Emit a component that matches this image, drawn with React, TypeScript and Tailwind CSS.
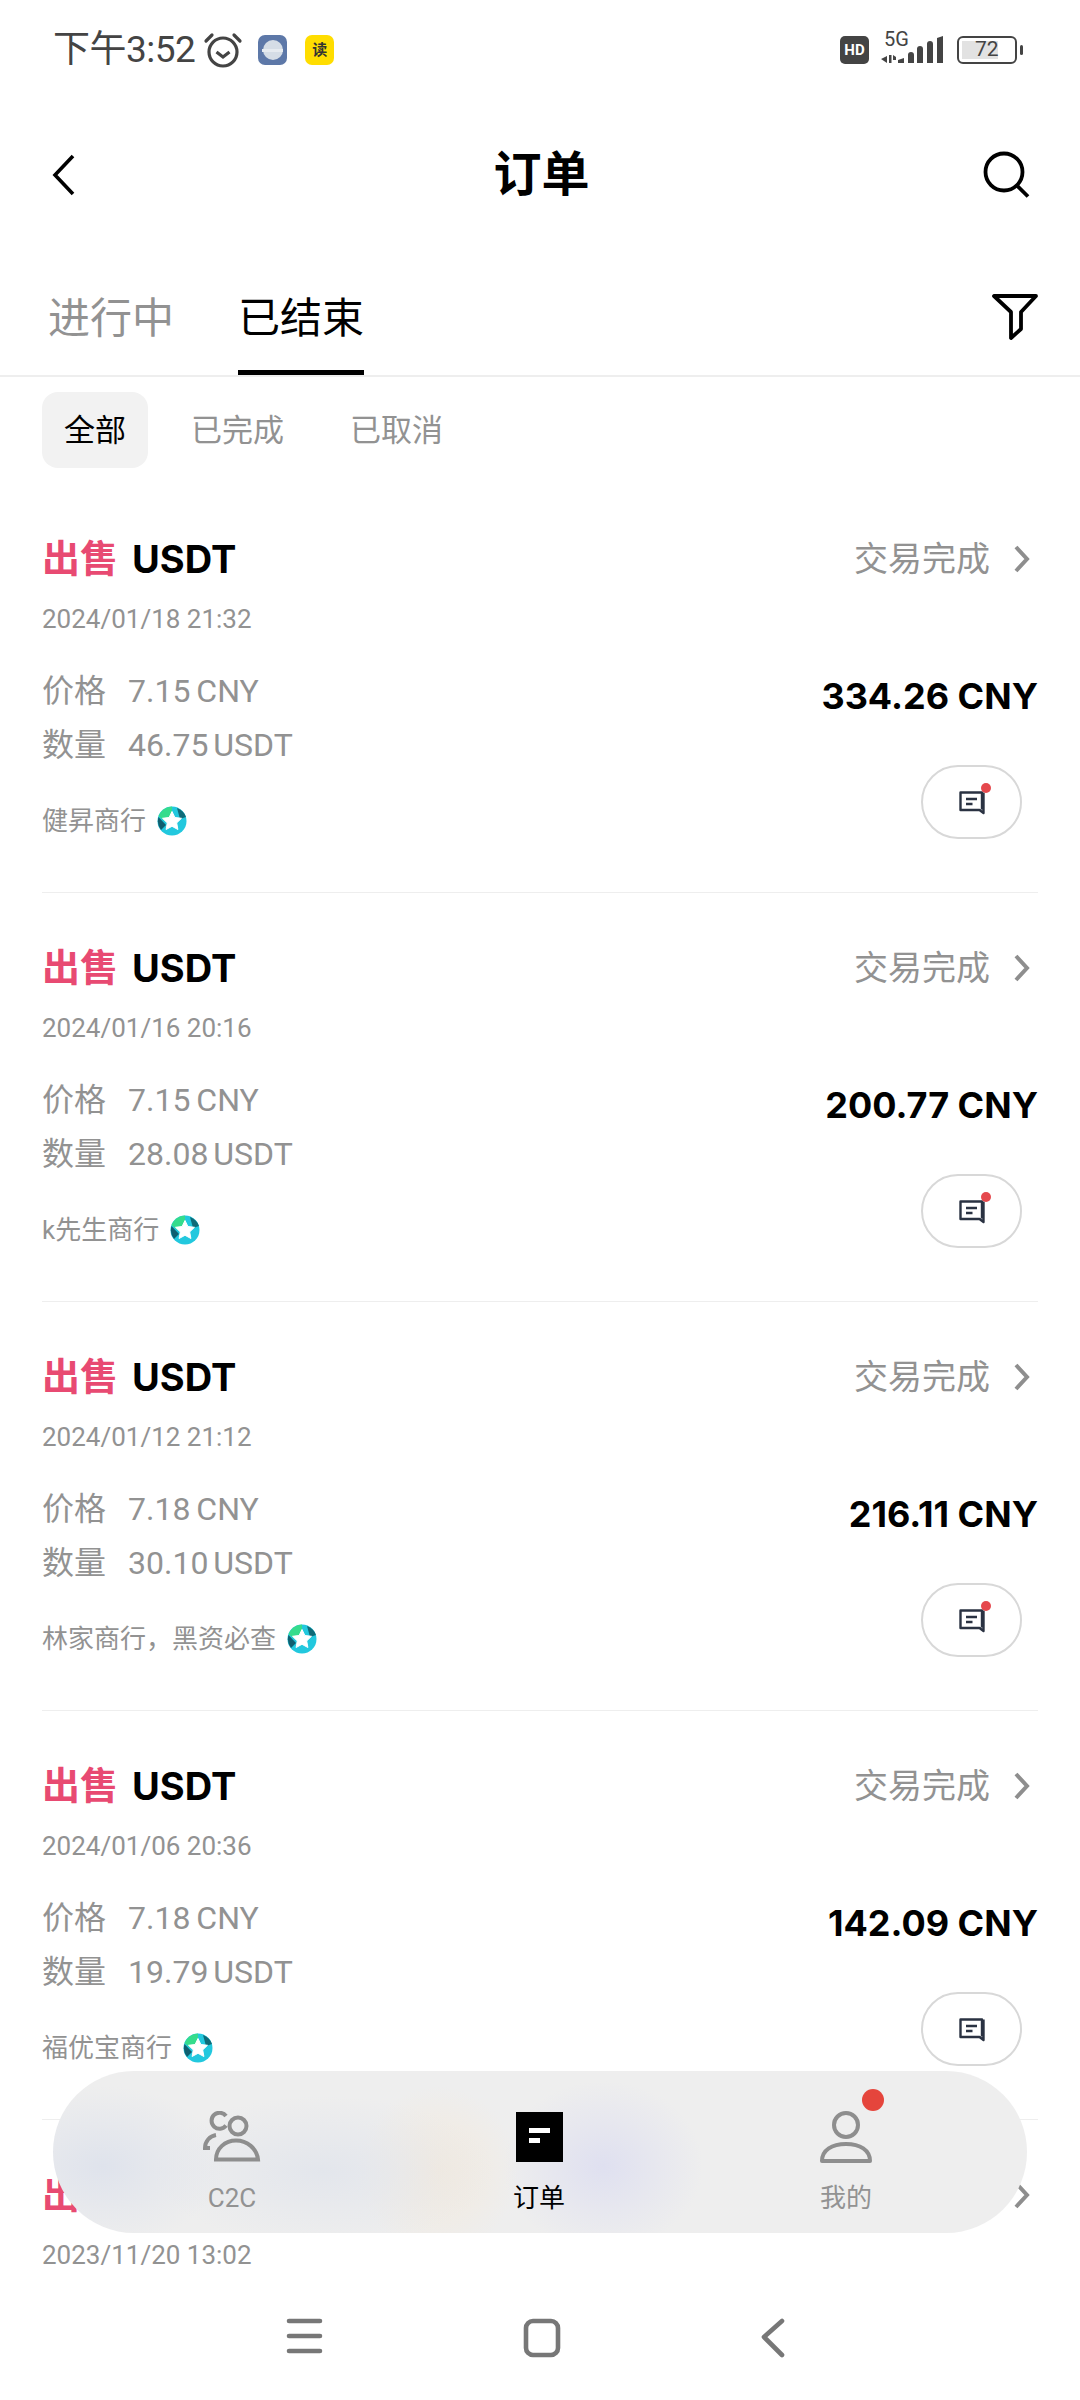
import React from 'react';

// the last row is cut off by the tab pill and system bar: only its visible parts are given
const orders = [
  { date: '2024/01/18 21:32', price: '7.15', qty: '46.75', total: '334.26', shop: '健昇商行', dot: true },
  { date: '2024/01/16 20:16', price: '7.15', qty: '28.08', total: '200.77', shop: 'k先生商行', dot: true },
  { date: '2024/01/12 21:12', price: '7.18', qty: '30.10', total: '216.11', shop: '林家商行，黑资必查', dot: true },
  { date: '2024/01/06 20:36', price: '7.18', qty: '19.79', total: '142.09', shop: '福优宝商行', dot: false },
  { date: '2023/11/20 13:02', price: '', qty: '', total: '', shop: '', dot: false },
];

const StarBadge = () => (
  <svg width="30" height="30" viewBox="0 0 30 30">
    <circle cx="15" cy="15" r="14.500" fill="#22c8de" />
    <path d="M15 .5A14.500 14.500 0 0 0 1.500 10l6 5L15 8z" fill="#35dc8c" />
    <path d="M20 2A14.500 14.500 0 0 1 29 11l-6 2z" fill="#0f6a78" />
    <path d="M1.500 11A14.500 14.500 0 0 0 4 24l5-5z" fill="#0f5f70" />
    <path d="M15 5.500l2.900 6 6.600.8-4.800 4.600 1.200 6.600-5.900-3.200-5.900 3.200 1.200-6.600-4.800-4.600 6.600-.8z" fill="#fff" stroke="#fff" strokeWidth="1" strokeLinejoin="round" />
  </svg>
);

const ChatIcon = ({ dot }: { dot: boolean }) => (
  <span className="relative flex h-[32px] w-[32px] items-center justify-center">
    <svg width="30" height="30" viewBox="0 0 30 30" fill="none" stroke="#2a3242" strokeWidth="2.400">
      <path d="M25 22.500V5.500H3.500V23H22.500L26.500 26V5.500" strokeLinejoin="round" />
      <path d="M9 12H20M9 17H15.500" />
    </svg>
    {dot && <span className="absolute right-[-3px] top-[-3px] h-[10px] w-[10px] rounded-full bg-[#e5484d]" />}
  </span>
);

const Chevron = () => (
  <svg width="18" height="30" viewBox="0 0 18 30" fill="none" stroke="#8e8e8e" strokeWidth="4">
    <path d="M3 3l11 12L3 27" />
  </svg>
);

const Order = ({ o }: { o: (typeof orders)[number] }) => (
  <div className="flex h-[409px] shrink-0 justify-between border-b border-[#eeeeee] pt-[55px]">
    <div className="flex flex-col">
      <div className="flex h-[40px] items-center text-[38px] font-bold leading-[40px] text-black">
        <span className="text-[#e84a72]">出售</span>
        {o.total && <span className="ml-[14px] font-['Inter']">USDT</span>}
      </div>
      <div className="mt-[22px] text-[26px] leading-[36px] text-[#929292]">{o.date}</div>
      {o.total && (
        <>
          <div className="mt-[27px] flex text-[32px] leading-[54px] text-[#929292]">
            <span className="w-[86px]">价格</span>
            <span className="[word-spacing:-2px]">{o.price} CNY</span>
          </div>
          <div className="flex text-[32px] leading-[54px] text-[#929292]">
            <span className="w-[86px]">数量</span>
            <span className="[word-spacing:-3px]">{o.qty} USDT</span>
          </div>
          <div className="mt-[29px] flex h-[40px] items-center text-[26px] text-[#929292]">
            <span>{o.shop}</span>
            <span className="ml-[11px]"><StarBadge /></span>
          </div>
        </>
      )}
    </div>
    <div className="flex flex-col items-end">
      <div className="flex h-[40px] items-center text-[34px] text-[#929292]">
        {o.total && <span>交易完成</span>}
        <span className="ml-[23px] mr-[7px]"><Chevron /></span>
      </div>
      {o.total && (
        <>
          <div className="mt-[95px] font-['Inter'] text-[36px] font-bold leading-[44px] text-black">{o.total} CNY</div>
          <div className="mr-[16px] mt-[47px] flex h-[74px] w-[101px] items-center justify-center rounded-full border-2 border-[#d8d8d8]">
            <ChatIcon dot={o.dot} />
          </div>
        </>
      )}
    </div>
  </div>
);

const NavItem = ({ label, active, badge, children }: { label: string; active?: boolean; badge?: boolean; children: React.ReactNode }) => (
  <div className="relative flex w-[120px] flex-col items-center">
    <div className="flex h-[58px] items-center justify-center">{children}</div>
    <div className={`mt-[14px] text-[26px] leading-[36px] ${active ? 'text-black' : 'text-[#929292]'}`}>{label}</div>
    {badge && <span className="absolute left-[76px] top-[-19px] h-[22px] w-[22px] rounded-full bg-[#e5453c]" />}
  </div>
);

export default function App() {
  return (
    <div className="relative flex h-[2400px] w-[1080px] flex-col overflow-hidden bg-white font-['Roboto','Noto_Sans_CJK_SC',sans-serif]">
      {/* status bar */}
      <div className="flex h-[100px] shrink-0 items-center justify-between pl-[53px] pr-[57px] text-[#444444]">
        <div className="flex items-center">
          <span className="text-[37px] tracking-[-0.5px]">下午3:52</span>
          <svg className="ml-[8px]" width="40" height="38" viewBox="0 0 40 38" fill="none" stroke="#444" strokeWidth="3.200">
            <circle cx="20" cy="21" r="14" />
            <path d="M13.500 21l6.500 5 6.500-5" />
            <path d="M3 10l6-6M37 10l-6-6" strokeLinecap="round" />
          </svg>
          <div className="relative ml-[15px] flex h-[30px] w-[29px] items-center justify-center rounded-[7px] bg-[#5d78a8]">
            <span className="h-[20px] w-[20px] rounded-full bg-[#d5dde6]" />
            <span className="absolute left-[4px] top-[14px] h-[3px] w-[21px] bg-[#e6ebf0]" />
          </div>
          <div className="ml-[18px] flex h-[30px] w-[29px] items-center justify-center rounded-[7px] bg-[#ffdd00] text-[15px] font-bold text-[#333333]">读</div>
        </div>
        <div className="flex items-center">
          <div className="flex h-[28px] w-[29px] items-center justify-center rounded-[5px] bg-[#444444] text-[15px] font-bold leading-none text-white">HD</div>
          <div className="relative ml-[12px] h-[34px] w-[62px]">
            <span className="absolute left-[3px] top-[-5px] text-[20px] leading-[22px]">5G</span>
            <svg width="62" height="34" viewBox="0 0 62 34" fill="#444">
              <path d="M0 26l6-3v7zM8 22h2.500v8H8zM12 22l3 2v3h-3zM17 30v-3l6-2v5zM27 30v-8a2 2 0 0 1 6 0v8zM36 30V16a2 2 0 0 1 6 0v14zM46 30V11a2 2 0 0 1 6 0v19zM56 30V5l6-2v27z" />
            </svg>
          </div>
          <div className="ml-[14px] flex items-center">
            <div className="flex h-[28px] w-[60px] items-center rounded-[6px] border-[2.500px] border-[#444444] p-[3px]">
              <div className="relative h-full w-[72%] bg-[#e2e2e2]">
                <span className="absolute left-[13px] top-[-7px] text-[21px] leading-[30px]">72</span>
              </div>
            </div>
            <span className="ml-[3px] h-[10px] w-[3px] rounded-full bg-[#444444]" />
          </div>
        </div>
      </div>

      {/* title bar */}
      <div className="flex h-[150px] shrink-0 items-center justify-between pl-[52px] pr-[49px]">
        <div className="w-[48px]">
          <svg width="24" height="44" viewBox="0 0 24 44" fill="none" stroke="#000" strokeWidth="3.600">
            <path d="M21 3L3 22l18 19" />
          </svg>
        </div>
        <span className="text-[48px] font-bold text-black">订单</span>
        <svg width="48" height="48" viewBox="0 0 48 48" fill="none" stroke="#000" strokeWidth="3.800">
          <circle cx="21" cy="21" r="18.500" />
          <path d="M33.500 34L45 45.500" />
        </svg>
      </div>

      {/* tabs */}
      <div className="flex h-[127px] shrink-0 items-end justify-between border-b-2 border-[#eeeeee] pl-[48px] pr-[41px]">
        <div className="flex">
          <div className="h-[94px] text-[42px] leading-[75px] text-[#929292]">进行中</div>
          <div className="relative ml-[64px] h-[94px] w-[126px] text-center text-[42px] leading-[75px] text-black">
            已结束
            <span className="absolute bottom-0 left-0 h-[5px] w-full bg-black" />
          </div>
        </div>
        <svg className="mb-[34px]" width="48" height="48" viewBox="0 0 48 48" fill="none" stroke="#000" strokeWidth="3.800" strokeLinejoin="round">
          <path d="M3 3h42L30 19v17l-10 9V19z" />
        </svg>
      </div>

      {/* chips */}
      <div className="mt-[15px] flex shrink-0 items-center pl-[42px] text-[31px] text-[#929292]">
        <div className="flex h-[76px] w-[106px] items-center justify-center rounded-[16px] bg-[#f2f2f2] pt-[2px] text-black">全部</div>
        <div className="ml-[43px] pt-[2px]">已完成</div>
        <div className="ml-[66px] pt-[2px]">已取消</div>
      </div>

      {/* orders */}
      <div className="mt-[16px] flex flex-col px-[42px]">
        {orders.map((o) => (
          <Order key={o.date} o={o} />
        ))}
      </div>

      {/* bottom tab pill */}
      <div className="absolute bottom-[167px] left-[53px] flex h-[162px] w-[974px] items-center justify-between rounded-[81px] bg-[#eeeeee] bg-[radial-gradient(ellipse_120px_80px_at_50px_95px,#dfe3ec,transparent),radial-gradient(ellipse_170px_75px_at_270px_100px,#e3e6ec,transparent),radial-gradient(ellipse_80px_85px_at_385px_100px,#f3eadd,transparent),radial-gradient(ellipse_100px_85px_at_550px_95px,#dfe0f0,transparent)] pl-[119px] pr-[121px] pt-[20px]">
        <NavItem label="C2C">
          <svg width="60" height="52" viewBox="0 0 60 52" fill="none" stroke="#8e8e8e" strokeWidth="4">
            <path d="M24 14.500A8 8 0 1 1 24 5" />
            <circle cx="36" cy="15" r="8.500" />
            <path d="M14 24c-6 1-11 6-11 13l5 0" />
            <path d="M14 48.500c0-11 9-19 20-19s21 8 22 19z" />
          </svg>
        </NavItem>
        <NavItem label="订单" active>
          <div className="flex h-[50px] w-[47px] flex-col gap-[5px] bg-black pl-[13px] pt-[16px]">
            <span className="h-[5px] w-[21px] bg-white" />
            <span className="h-[5px] w-[11px] bg-white" />
          </div>
        </NavItem>
        <NavItem label="我的" badge>
          <svg width="54" height="52" viewBox="0 0 54 52" fill="none" stroke="#8e8e8e" strokeWidth="4">
            <circle cx="27" cy="14" r="12" />
            <path d="M3 50c0-11 10-17 24-17s24 6 24 17z" strokeLinejoin="round" />
          </svg>
        </NavItem>
      </div>

      {/* system nav */}
      <div className="absolute bottom-0 left-0 flex h-[115px] w-full items-start justify-between bg-white pl-[286px] pr-[294px] pt-[33px]">
        <svg width="37" height="36" viewBox="0 0 37 36" fill="none" stroke="#777" strokeWidth="4.600" strokeLinecap="round">
          <path d="M3 3h31M3 18h31M3 33h31" />
        </svg>
        <svg width="38" height="40" viewBox="0 0 38 40" fill="none" stroke="#777" strokeWidth="4.600">
          <rect x="3" y="3" width="32" height="34" rx="7" />
        </svg>
        <svg width="26" height="40" viewBox="0 0 26 40" fill="none" stroke="#777" strokeWidth="4.600" strokeLinecap="round" strokeLinejoin="round">
          <path d="M22 3L4 19l18 18" />
        </svg>
      </div>
    </div>
  );
}
